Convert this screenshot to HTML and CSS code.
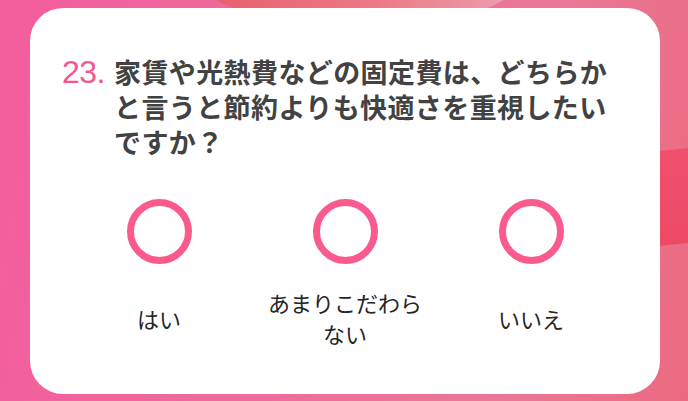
FILE: index.html
```html
<!DOCTYPE html>
<html lang="ja">
<head>
<meta charset="utf-8">
<title>Question 23</title>
<link rel="stylesheet" href="styles.css">
</head>
<body>
<div class="bg">
  <div class="blob blob-top"></div>
  <div class="blob blob-right"></div>
  <main class="card">
    <div class="question">
      <span class="num">23.</span>
      <p class="text">家賃や光熱費などの固定費は、どちらかと言うと節約よりも快適さを重視したいですか？</p>
    </div>
    <div class="options">
      <div class="option">
        <span class="ring"></span>
        <span class="label">はい</span>
      </div>
      <div class="option">
        <span class="ring"></span>
        <span class="label">あまりこだわらない</span>
      </div>
      <div class="option">
        <span class="ring"></span>
        <span class="label">いいえ</span>
      </div>
    </div>
  </main>
</div>
</body>
</html>
```
FILE: styles.css
```css
html, body {
  margin: 0;
  padding: 0;
  width: 688px;
  height: 401px;
  overflow: hidden;
}
.bg {
  position: relative;
  width: 688px;
  height: 401px;
  overflow: hidden;
  background: linear-gradient(100deg, #f35d9c 0%, #ee6a9c 40%, #ea7896 75%, #ec6a80 100%);
  padding: 8px 28px 7px 30px;
  box-sizing: border-box;
}
.blob {
  position: absolute;
  pointer-events: none;
}
.blob-top {
  left: 180px;
  top: -120px;
  width: 360px;
  height: 150px;
  border-radius: 50%;
  background: linear-gradient(90deg, #e85a68 0%, #ec7a86 55%, #eba4b4 100%);
}
.blob-right {
  right: -20px;
  top: 150px;
  width: 80px;
  height: 95px;
  background: linear-gradient(180deg, #f0506e, #ee4a66);
  transform: skewY(-6deg);
}
.card {
  position: relative;
  height: 386px;
  background: #fff;
  border-radius: 33px;
  box-sizing: border-box;
  padding: 46px 36px 0 36px;
  font-family: "Noto Sans CJK JP", sans-serif;
}
.question {
  display: flex;
  align-items: baseline;
  margin-left: -4px;
}
.num {
  font-family: "Liberation Sans", Arial, sans-serif;
  font-size: 32px;
  color: #f2588b;
  width: 52px;
  flex: none;
  letter-spacing: -0.5px;
}
.text {
  margin: 0;
  width: 505px;
  font-size: 27px;
  line-height: 35px;
  letter-spacing: 0.4px;
  font-weight: 700;
  color: #424242;
}
.options {
  display: grid;
  grid-template-columns: repeat(3, 1fr);
  margin-top: 40px;
}
.option {
  display: flex;
  flex-direction: column;
  align-items: center;
}
.ring {
  width: 65px;
  height: 65px;
  box-sizing: border-box;
  border: 7px solid #fb5a8c;
  border-radius: 50%;
}
.label {
  margin-top: 23px;
  width: 164px;
  min-height: 62px;
  display: flex;
  align-items: center;
  justify-content: center;
  text-align: center;
  font-size: 22px;
  line-height: 31px;
  color: #262626;
}
```
